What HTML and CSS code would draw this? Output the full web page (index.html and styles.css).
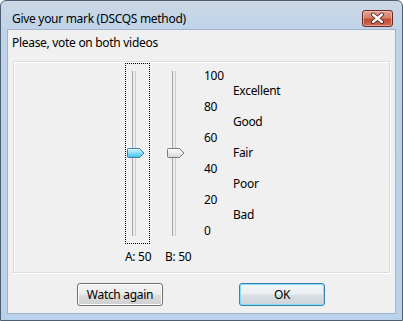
FILE: index.html
```html
<!DOCTYPE html>
<html>
<head>
<meta charset="utf-8">
<link rel="stylesheet" href="styles.css">
</head>
<body>
<div class="window">
  <div class="titlebar">
    <span class="title">Give your mark (DSCQS method)</span>
    <div class="close">
      <svg width="29" height="15" viewBox="0 0 29 15">
        <path d="M10 3.5 L19 11 M19 3.5 L10 11" stroke="#4a1c16" stroke-width="4" stroke-linecap="round" fill="none"/>
        <path d="M10 3.5 L19 11 M19 3.5 L10 11" stroke="#ffffff" stroke-width="2.3" stroke-linecap="round" fill="none"/>
      </svg>
    </div>
  </div>
  <div class="client">
    <div class="prompt">Please, vote on both videos</div>
    <div class="group">
      <div class="slider slider-a">
        <div class="slider-box focused">
          <div class="track"></div>
          <svg class="thumb" width="18" height="10" viewBox="0 0 18 10">
            <defs>
              <linearGradient id="gblue" x1="0" y1="0" x2="0" y2="1">
                <stop offset="0" stop-color="#e6f8fe"/>
                <stop offset="0.45" stop-color="#8ee0f8"/>
                <stop offset="1" stop-color="#3fc0ee"/>
              </linearGradient>
            </defs>
            <path d="M1.5 0.5 H12.5 L17 5 L12.5 9.5 H1.5 Q0.5 9.5 0.5 8.5 V1.5 Q0.5 0.5 1.5 0.5 Z" fill="url(#gblue)" stroke="#3c7fb1"/>
          </svg>
        </div>
        <div class="slider-label">A: 50</div>
      </div>
      <div class="slider slider-b">
        <div class="slider-box">
          <div class="track"></div>
          <svg class="thumb" width="18" height="10" viewBox="0 0 18 10">
            <defs>
              <linearGradient id="ggray" x1="0" y1="0" x2="0" y2="1">
                <stop offset="0" stop-color="#fcfcfc"/>
                <stop offset="0.5" stop-color="#ececec"/>
                <stop offset="1" stop-color="#d4d4d4"/>
              </linearGradient>
            </defs>
            <path d="M1.5 0.5 H12.5 L17 5 L12.5 9.5 H1.5 Q0.5 9.5 0.5 8.5 V1.5 Q0.5 0.5 1.5 0.5 Z" fill="url(#ggray)" stroke="#7a7a7a"/>
          </svg>
        </div>
        <div class="slider-label">B: 50</div>
      </div>
      <div class="scale-nums">
        <span>100</span><span>80</span><span>60</span><span>40</span><span>20</span><span>0</span>
      </div>
      <div class="scale-words">
        <span>Excellent</span><span>Good</span><span>Fair</span><span>Poor</span><span>Bad</span>
      </div>
    </div>
    <div class="buttons">
      <button class="btn">Watch again</button>
      <button class="btn btn-default">OK</button>
    </div>
  </div>
</div>
</body>
</html>
```
FILE: styles.css
```css
* { box-sizing: border-box; }
html, body {
  margin: 0;
  padding: 0;
  background: #ffffff;
}
body {
  font-family: "Noto Sans", "Open Sans", sans-serif;
  font-size: 12px;
  line-height: 15px;
  letter-spacing: -0.3px;
  color: #000;
}
.window {
  width: 403px;
  height: 321px;
  border: 1px solid #4f5f72;
  border-radius: 6px 6px 0 0;
  background: linear-gradient(to bottom, #cbd8e6 0px, #bfd3e9 30px, #b9d1ea 100%);
  display: flex;
  flex-direction: column;
  overflow: hidden;
}
.titlebar {
  height: 28px;
  display: flex;
  align-items: flex-start;
  padding-left: 11px;
}
.title {
  margin-top: 10px;
  flex: 1;
}
.close {
  margin-top: 9px;
  margin-right: 9px;
  width: 31px;
  height: 17px;
  border: 1px solid #6b2a22;
  border-radius: 3px;
  background: linear-gradient(to bottom, #e3a292 0%, #d5806b 45%, #c24c36 55%, #cc6a52 100%);
  box-shadow: inset 0 0 0 1px rgba(255, 220, 210, 0.5);
  display: flex;
  align-items: center;
  justify-content: center;
}
.close svg { display: block; }
.client {
  margin: 0 6px 6px 6px;
  flex: 1;
  background: #f0f0f0;
  border: 1px solid #9fb3ca;
  display: flex;
  flex-direction: column;
}
.prompt {
  padding: 5px 4px 0 4px;
}
.group {
  margin: 11px 5px 0 5px;
  height: 212px;
  border: 1px solid #d5dfe5;
  box-shadow: inset 1px 1px 0 #ffffff, 1px 1px 0 #ffffff;
  display: flex;
  align-items: flex-start;
}
.slider {
  margin-top: 1px;
  width: 25px;
  flex: none;
  display: flex;
  flex-direction: column;
}
.slider-a { margin-left: 111px; }
.slider-b { margin-left: 15px; }
.slider-box {
  position: relative;
  width: 25px;
  height: 181px;
  border: 1px solid transparent;
}
.slider-box.focused {
  border: 1px dotted #000;
}
.track {
  position: absolute;
  left: 6px;
  top: 7px;
  width: 4px;
  height: 165px;
  border-left: 1px solid #a8a8a8;
  border-right: 1px solid #cfcfcf;
  background: #e9ecec;
}
.thumb {
  position: absolute;
  left: 1px;
  top: 84px;
  display: block;
}
.slider-label {
  margin-top: 5px;
  white-space: nowrap;
}
.scale-nums {
  margin-left: 14px;
  margin-top: 6px;
  width: 29px;
  flex: none;
  display: flex;
  flex-direction: column;
  gap: 16px;
}
.scale-words {
  margin-top: 21px;
  display: flex;
  flex-direction: column;
  gap: 16px;
}
.buttons {
  margin-top: 10px;
  padding-left: 69px;
  display: flex;
  gap: 76px;
}
.btn {
  width: 86px;
  height: 23px;
  margin: 0;
  padding: 0;
  font-family: inherit;
  font-size: 12px;
  letter-spacing: -0.3px;
  color: #000;
  border: 1px solid #707070;
  border-radius: 3px;
  background: linear-gradient(to bottom, #f2f2f2 0%, #ebebeb 48%, #dddddd 52%, #cfcfcf 100%);
  box-shadow: inset 0 0 0 1px #fcfcfc;
}
.btn-default {
  border-color: #3c7fb1;
  box-shadow: inset 0 0 0 1px #7fe0fb;
  background: linear-gradient(to bottom, #f2f6f8 0%, #eaeef1 48%, #dadfe3 52%, #cdd4d9 100%);
}
```
